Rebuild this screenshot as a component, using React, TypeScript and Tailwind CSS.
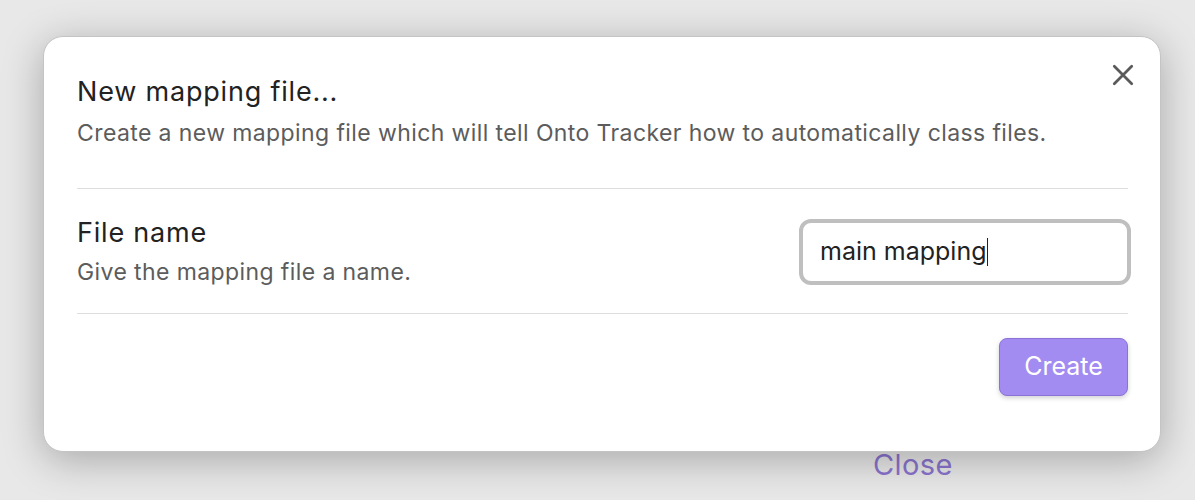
import React from "react";

export default function App() {
  return (
    <div
      className="relative w-[1195px] h-[500px] overflow-hidden bg-[#e8e8e8]"
      style={{ fontFamily: "Inter, 'Noto Sans', sans-serif" }}
    >
      {/* page behind the dialog */}
      <div className="pt-[446px] pl-[873px] text-[29px] leading-[38px] text-[#8a74cf] tracking-[0.4px]">Close</div>

      {/* dialog overlay */}
      <div className="absolute left-[43px] top-[36px] w-[1118px] h-[416px] rounded-[20px] border border-[#c4c4c4] bg-white shadow-[0_8px_40px_rgba(0,0,0,0.28)] pl-[33px] pr-[32px] pt-[39px]">
        <button className="absolute right-[25px] top-[26px] w-[24px] h-[24px] flex items-center justify-center text-[#5a5a5a]">
          <svg width="22" height="22" viewBox="0 0 24 24" fill="none" stroke="currentColor" strokeWidth="3" strokeLinecap="round">
            <path d="M2.5 2.5 L21.5 21.5 M21.5 2.5 L2.5 21.5" />
          </svg>
        </button>
        <div className="text-[27px] leading-[32px] text-[#222] tracking-[0.8px]">New mapping file...</div>
        <div className="mt-[11px] text-[23px] leading-[28px] text-[#5c5c5c] tracking-[0.4px]">
          Create a new mapping file which will tell Onto Tracker how to automatically class files.
        </div>
        <div className="mt-[41px] h-px bg-[#dddddd]" />
        <div className="flex items-center justify-between pt-[28px] pb-[27px]">
          <div>
            <div className="text-[27px] leading-[32px] text-[#222] tracking-[0.8px]">File name</div>
            <div className="mt-[9px] text-[23px] leading-[28px] text-[#5c5c5c] tracking-[0.4px]">
              Give the mapping file a name.
            </div>
          </div>
          <div className="-mr-[3px] w-[332px] h-[66px] rounded-[12px] border-4 border-[#bfbfbf] flex items-center pl-[17px] text-[25px] text-[#222]">
            <span>main mapping</span>
            <span className="inline-block w-[1.5px] h-[28px] bg-[#222]" />
          </div>
        </div>
        <div className="h-px bg-[#dddddd]" />
        <div className="flex justify-end mt-[24px]">
          <button className="h-[58px] w-[129px] rounded-[8px] border border-[#8b72d6] bg-[#a38cf1] text-white text-[25px] shadow-[0_2px_5px_rgba(0,0,0,0.18)]">
            Create
          </button>
        </div>
      </div>
    </div>
  );
}
